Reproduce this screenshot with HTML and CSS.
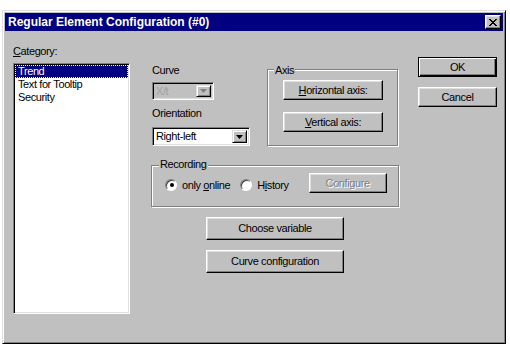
FILE: index.html
```html
<!DOCTYPE html>
<html>
<head>
<meta charset="utf-8">
<title>Regular Element Configuration</title>
<link rel="stylesheet" href="styles.css">
</head>
<body>
<div class="dialog">
  <div class="titlebar">
    <span class="title">Regular Element Configuration (#0)</span>
    <span class="close">
      <svg width="8" height="7" viewBox="0 0 8 7" shape-rendering="crispEdges">
        <path d="M0 0h2v1h-2z M6 0h2v1h-2z M1 1h2v1h-2z M5 1h2v1h-2z M2 2h4v1h-4z M3 3h2v1h-2z M2 4h4v1h-4z M1 5h2v1h-2z M5 5h2v1h-2z M0 6h2v1h-2z M6 6h2v1h-2z" fill="#000"/>
      </svg>
    </span>
  </div>
  <div class="content">
    <div class="col-left">
      <div class="label"><u>C</u>ategory:</div>
      <div class="listbox">
        <div class="item selected">Trend</div>
        <div class="item">Text for Tooltip</div>
        <div class="item">Security</div>
      </div>
    </div>
    <div class="col-mid">
      <div class="top-row">
        <div class="curve-col">
          <div class="label">Curve</div>
          <div class="combo combo-curve disabled">
            <span class="combo-text">X/t</span>
            <span class="combo-btn"><svg width="7" height="4" viewBox="0 0 7 4"><path d="M0 0h7l-3.5 4z"/></svg></span>
          </div>
          <div class="label label-orient">Orientation</div>
          <div class="combo combo-orient">
            <span class="combo-text">Right-left</span>
            <span class="combo-btn"><svg width="7" height="4" viewBox="0 0 7 4"><path d="M0 0h7l-3.5 4z"/></svg></span>
          </div>
        </div>
        <div class="group axis">
          <span class="legend legend-axis">Axis</span>
          <button class="btn axis-btn"><u>H</u>orizontal axis:</button>
          <button class="btn axis-btn axis-btn-v"><u>V</u>ertical axis:</button>
        </div>
      </div>
      <div class="group recording">
        <span class="legend legend-rec">Recording</span>
        <span class="radio"><span class="radio-dot checked"></span><span class="radio-text">only <u>o</u>nline</span></span>
        <span class="radio radio-hist"><span class="radio-dot"></span><span class="radio-text">H<u>i</u>story</span></span>
        <button class="btn configure" disabled>Configure</button>
      </div>
      <button class="btn wide">Choose variable</button>
      <button class="btn wide wide-2">Curve configuration</button>
    </div>
    <div class="col-right">
      <button class="btn default">OK</button>
      <button class="btn cancel">Cancel</button>
    </div>
  </div>
</div>
</body>
</html>
```

FILE: styles.css
```css
html, body {
  margin: 0;
  padding: 0;
  background: #ffffff;
}

body {
  font-family: "Liberation Sans", Arial, sans-serif;
  font-size: 11px;
  letter-spacing: -0.4px;
  color: #000;
}

.dialog {
  margin: 10px 0 0 2px;
  width: 504px;
  height: 334px;
  box-sizing: border-box;
  background: #c0c0c0;
  border: 1px solid;
  border-color: #dfdfdf #000 #000 #dfdfdf;
  box-shadow: inset 1px 1px #fff, inset -1px -1px #808080;
  padding: 2px;
  display: flex;
  flex-direction: column;
}

.titlebar {
  height: 18px;
  background: #000080;
  color: #fff;
  display: flex;
  align-items: center;
  justify-content: space-between;
  padding: 0 2px 0 3px;
}

.title {
  font-weight: bold;
  font-size: 12px;
  letter-spacing: 0;
  line-height: 18px;
}

.close {
  width: 16px;
  height: 14px;
  box-sizing: border-box;
  background: #c0c0c0;
  border: 1px solid;
  border-color: #fff #000 #000 #fff;
  box-shadow: inset -1px -1px #808080, inset 1px 1px #dfdfdf;
  display: flex;
  align-items: center;
  justify-content: center;
}

.close svg {
  display: block;
}

.content {
  flex: 1;
  display: flex;
  align-items: flex-start;
}

.label {
  line-height: 13px;
  height: 13px;
  white-space: nowrap;
}

.col-left {
  margin: 14px 0 0 8px;
  width: 117px;
}

.listbox {
  margin-top: 5px;
  width: 117px;
  height: 251px;
  box-sizing: border-box;
  background: #fff;
  border: 1px solid;
  border-color: #808080 #fff #fff #808080;
  box-shadow: inset 1px 1px #000, inset -1px -1px #dfdfdf;
  padding: 1px;
}

.item {
  height: 13px;
  line-height: 13px;
  padding-left: 3px;
  white-space: nowrap;
}

.item.selected {
  background: #000080;
  color: #fff;
  outline: 1px dotted #ffffa0;
  outline-offset: -1px;
}

.col-mid {
  margin: 33px 0 0 21px;
  width: 248px;
  display: flex;
  flex-direction: column;
}

.top-row {
  display: flex;
  align-items: flex-start;
}

.curve-col {
  margin-left: 1px;
  width: 98px;
  display: flex;
  flex-direction: column;
}

.combo {
  box-sizing: border-box;
  background: #fff;
  border: 1px solid;
  border-color: #808080 #fff #fff #808080;
  box-shadow: inset 1px 1px #000, inset -1px -1px #dfdfdf;
  padding: 2px;
  display: flex;
  align-items: stretch;
}

.combo-curve {
  margin-top: 5px;
  width: 62px;
  height: 18px;
}

.combo-orient {
  margin-top: 7px;
  width: 98px;
  height: 19px;
}

.label-orient {
  margin-top: 7px;
}

.combo-text {
  flex: 1;
  line-height: 13px;
  padding-left: 1px;
  white-space: nowrap;
  overflow: hidden;
}

.combo-btn {
  width: 15px;
  box-sizing: border-box;
  background: #c0c0c0;
  border: 1px solid;
  border-color: #dfdfdf #000 #000 #dfdfdf;
  box-shadow: inset 1px 1px #fff, inset -1px -1px #808080;
  display: flex;
  align-items: center;
  justify-content: center;
}

.combo-btn svg {
  display: block;
  fill: #000;
}

.combo.disabled {
  background: #c0c0c0;
}

.combo.disabled .combo-text {
  color: #a0a0a0;
}

.combo.disabled .combo-btn svg {
  fill: #808080;
}

.group {
  position: relative;
  box-sizing: border-box;
  border: 1px solid #808080;
  box-shadow: inset 1px 1px #fff, 1px 1px #fff;
}

.legend {
  position: absolute;
  background: #c0c0c0;
  padding: 0 1px;
  line-height: 13px;
  white-space: nowrap;
}

.legend-axis {
  top: -6px;
  left: 6px;
}

.legend-rec {
  top: -8px;
  left: 7px;
}

.axis {
  margin: 5px 0 0 17px;
  width: 131px;
  padding: 10px 0 13px 15px;
  display: flex;
  flex-direction: column;
}

.btn {
  font-family: inherit;
  font-size: 11px;
  letter-spacing: -0.4px;
  color: #000;
  background: #c0c0c0;
  box-sizing: border-box;
  border: 1px solid;
  border-color: #fff #000 #000 #fff;
  box-shadow: inset -1px -1px #808080, inset 1px 1px #dfdfdf;
  padding: 0;
  margin: 0;
  line-height: 13px;
  text-align: center;
  white-space: nowrap;
}

.axis-btn {
  width: 100px;
  height: 20px;
}

.axis-btn-v {
  margin-top: 12px;
}

.recording {
  margin-top: 19px;
  width: 248px;
  padding: 7px 0 13px 13px;
  display: flex;
  align-items: center;
}

.radio {
  display: flex;
  align-items: center;
  white-space: nowrap;
  margin-top: 3px;
}

.radio-text {
  white-space: pre;
}

.radio-hist {
  margin-left: 10px;
}

.radio-dot {
  width: 12px;
  height: 12px;
  box-sizing: border-box;
  border-radius: 50%;
  background: #fff;
  border: 1px solid;
  border-color: #808080 #fff #fff #808080;
  box-shadow: inset 1px 1px #404040;
  margin-right: 5px;
  display: flex;
  align-items: center;
  justify-content: center;
}

.radio-dot.checked::after {
  content: "";
  width: 4px;
  height: 4px;
  border-radius: 50%;
  background: #000;
  margin: 1px 0 0 1px;
}

.configure {
  margin-left: 20px;
  width: 78px;
  height: 20px;
  color: #808080;
  text-shadow: 1px 1px #fff;
}

.wide {
  margin: 10px 0 0 55px;
  width: 138px;
  height: 23px;
}

.col-right {
  margin: 26px 0 0 19px;
  display: flex;
  flex-direction: column;
}

.col-right .btn {
  width: 79px;
  height: 20px;
}

.btn.default {
  border: 1px solid #000;
  box-shadow: inset 1px 1px #fff, inset -1px -1px #000, inset -2px -2px #808080;
}

.cancel {
  margin-top: 10px;
}
```
